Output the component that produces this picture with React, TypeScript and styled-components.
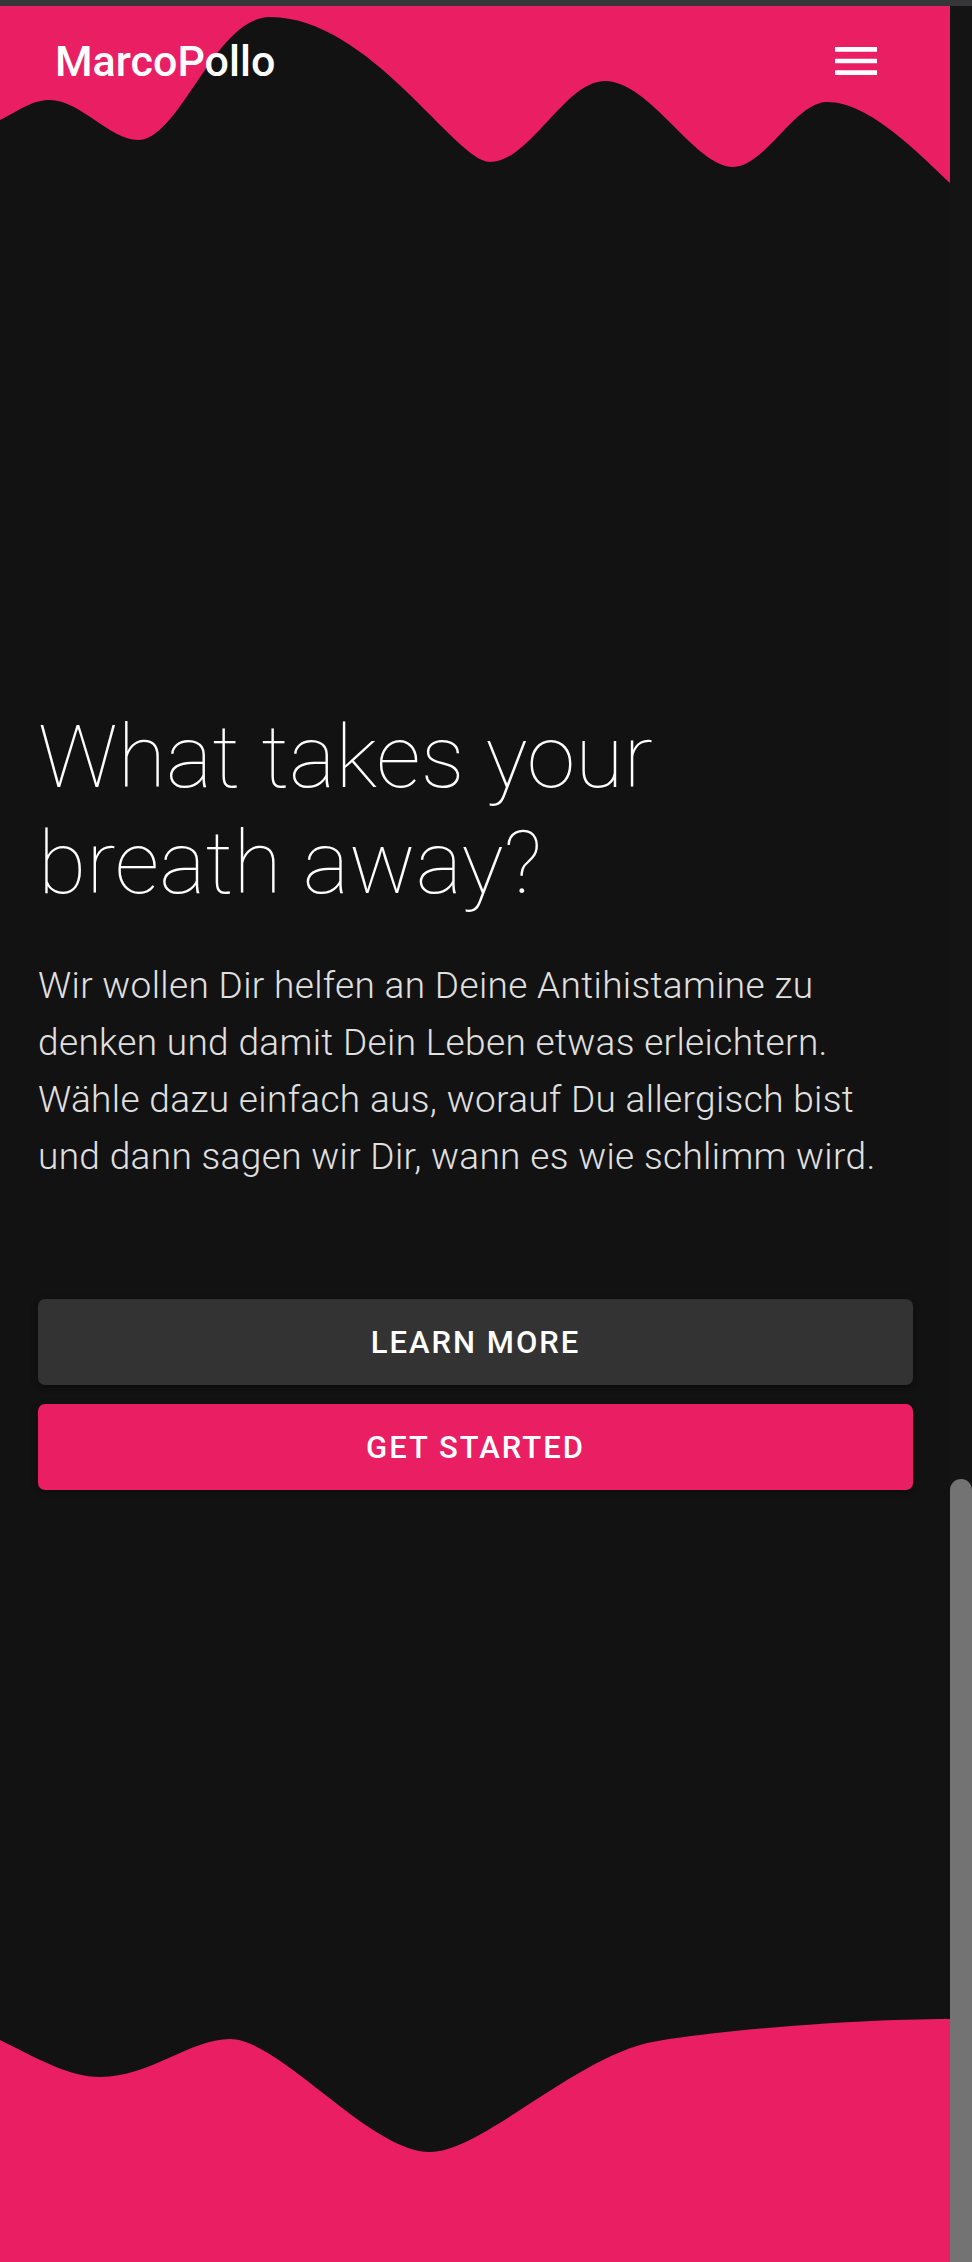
import styled, { createGlobalStyle } from "styled-components"
import { MdMenu } from "react-icons/md"

const pink = "#e91e63"
const dark = "#121212"

// wave outlines, traced from the mock (svg coords)
const topWave =
  "M0,114 C20,104 32,94 50,94 C80,94 110,134 138,134 C180,134 215,11 270,11 " +
  "C370,11 455,156 490,156 C530,156 565,75 605,75 C650,75 695,161 733,161 " +
  "C765,161 795,96 827,96 C870,96 920,149 950,177 L950,0 L0,0 Z"

const bottomWave =
  "M0,23 C40,43 70,60 100,60 C150,60 190,22 230,22 C280,22 370,135 430,135 " +
  "C480,135 570,45 647,26 C700,15 850,2 950,2 L950,245 L0,245 Z"

const GlobalStyle = createGlobalStyle`
  html, body {
    margin: 0;
    padding: 0;
    background: ${dark};
    overflow: hidden;
  }
  * { box-sizing: border-box; }
`

const Screen = styled.div`
  width: 972px;
  height: 2262px;
  display: flex;
  flex-direction: column;
  font-family: Roboto, "Noto Sans", sans-serif;
`
const StatusStrip = styled.div`
  height: 6px;
  background: #36363a;
  flex-shrink: 0;
`
const Body = styled.div`
  flex: 1;
  display: flex;
`
const Page = styled.main`
  width: 950px;
  display: flex;
  flex-direction: column;
  background: ${dark};
`
const ScrollTrack = styled.div`
  width: 22px;
  background: #141414;
  display: flex;
  flex-direction: column;
  justify-content: flex-end;
`
const ScrollThumb = styled.div`
  height: 783px;
  background: #737373;
  border-radius: 11px 11px 0 0;
`
const Header = styled.header`
  display: grid;
  & > * {
    grid-area: 1 / 1;
  }
`
const Wave = styled.svg`
  display: block;
`
const Toolbar = styled.div`
  height: 110px;
  display: flex;
  align-items: center;
  justify-content: space-between;
  padding: 0 66px 0 55px;
  align-self: start;
`
const Logo = styled.span`
  color: #fff;
  font-size: 43px;
  font-weight: 500;
`
const MenuButton = styled.button`
  background: transparent;
  border: none;
  padding: 0;
  color: #fff;
  display: flex;
  width: 56px;
  height: 56px;
`
const Hero = styled.section`
  padding: 508px 37px 0 38px;
  display: flex;
  flex-direction: column;
`
const Title = styled.h1`
  margin: 0;
  max-width: 760px;
  color: #fff;
  font-size: 88px;
  line-height: 106px;
  font-weight: 100;
`
const Lead = styled.p`
  margin: 41px 0 0;
  color: #e0e0e0;
  font-size: 37px;
  line-height: 57px;
  font-weight: 300;
  letter-spacing: 0.35px;
`
const Actions = styled.div`
  margin-top: 114px;
  display: flex;
  flex-direction: column;
  gap: 19px;
`
const ActionButton = styled.button<{ $primary?: boolean }>`
  height: 86px;
  border: none;
  border-radius: 7px;
  background: ${(p) => (p.$primary ? pink : "#333333")};
  color: #fff;
  font-family: Roboto, "Noto Sans", sans-serif;
  font-size: 31px;
  font-weight: 500;
  letter-spacing: 0.065em;
  text-transform: uppercase;
  box-shadow: 0 4px 2px -3px rgba(0, 0, 0, 0.2), 0 3px 4px 0 rgba(0, 0, 0, 0.14),
    0 2px 10px 0 rgba(0, 0, 0, 0.12);
`
const Spacer = styled.div`
  flex: 1;
`

const App = () => {
  return (
    <Screen>
      <GlobalStyle />
      <StatusStrip />
      <Body>
        <Page>
          <Header>
            <Wave width="950" height="190" viewBox="0 0 950 190">
              <path d={topWave} fill={pink} />
            </Wave>
            <Toolbar>
              <Logo>MarcoPollo</Logo>
              <MenuButton aria-label="menu">
                <MdMenu size={56} />
              </MenuButton>
            </Toolbar>
          </Header>
          <Hero>
            <Title>What takes your breath away?</Title>
            <Lead>
              Wir wollen Dir helfen an Deine Antihistamine zu denken und damit Dein Leben etwas
              erleichtern. Wähle dazu einfach aus, worauf Du allergisch bist und dann sagen wir
              Dir, wann es wie schlimm wird.
            </Lead>
            <Actions>
              <ActionButton>Learn more</ActionButton>
              <ActionButton $primary>Get started</ActionButton>
            </Actions>
          </Hero>
          <Spacer />
          <Wave width="950" height="245" viewBox="0 0 950 245">
            <path d={bottomWave} fill={pink} />
          </Wave>
        </Page>
        <ScrollTrack>
          <ScrollThumb />
        </ScrollTrack>
      </Body>
    </Screen>
  )
}

export default App
